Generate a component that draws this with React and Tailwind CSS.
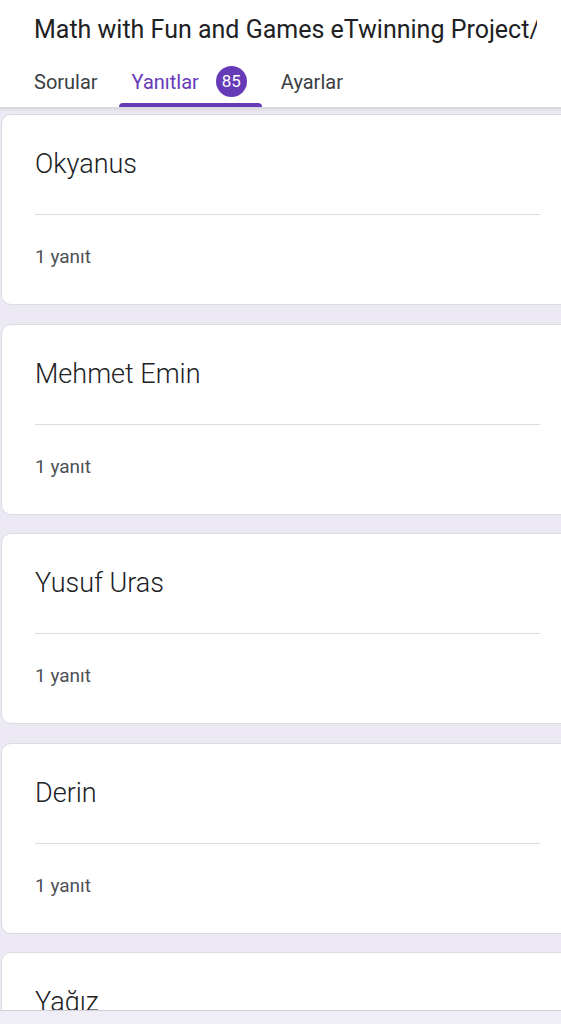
import React from "react";

const names = ["Okyanus", "Mehmet Emin", "Yusuf Uras", "Derin", "Yağız"];

function Card({ name }) {
  return (
    <div className="ml-px w-[600px] h-[191px] shrink-0 rounded-[10px] bg-white border border-[#dadce0] pl-[33px] pr-[60px]">
      <div className="h-[100px] border-b border-[#dadce0] flex items-start pt-[31px]">
        <span className="text-[27px] leading-[36px] font-light text-[#202124]">{name}</span>
      </div>
      <div className="pt-[30px] text-[19px] leading-[24px] text-[#4d5156]">1 yanıt</div>
    </div>
  );
}

export default function App() {
  return (
    <div
      className="w-[561px] h-[1024px] overflow-hidden bg-[#ece9f4] relative"
      style={{ fontFamily: "Roboto, 'Noto Sans', sans-serif" }}
    >
      <div className="bg-white h-[107px] flex flex-col">
        <div className="pl-[34px] pt-[14px] h-[58px]">
          <div className="w-[503px] overflow-hidden whitespace-nowrap text-[25px] leading-[32px] text-[#202124]">
            Math with Fun and Games eTwinning Project/Math
          </div>
        </div>
        <div className="flex pl-[21px] h-[49px] items-stretch text-[20px] text-[#3c4043]">
          <div className="px-[13px] flex items-center pb-[2px]">Sorular</div>
          <div className="ml-[8px] pl-[13px] pr-[15px] flex items-center relative pb-[2px] text-[#673ab7]">
            <span>Yanıtlar</span>
            <span className="ml-[17px] w-[31px] h-[31px] rounded-full bg-[#673ab7] text-white text-[17px] flex items-center justify-center">85</span>
            <div className="absolute left-0 right-0 bottom-0 h-[4px] rounded-t-[4px] bg-[#673ab7]"></div>
          </div>
          <div className="ml-[6px] px-[13px] flex items-center pb-[2px]">Ayarlar</div>
        </div>
      </div>
      <div className="h-[5px] bg-gradient-to-b from-[#d6d4dc] to-[#ece9f4]"></div>
      <div className="flex flex-col gap-[18.5px] pt-[2px]">
        {names.map((n) => (
          <Card key={n} name={n} />
        ))}
      </div>
      <div className="absolute left-0 right-0 bottom-0 h-[14px] bg-[#efedf5] border-t border-[#d0ced6]"></div>
    </div>
  );
}
